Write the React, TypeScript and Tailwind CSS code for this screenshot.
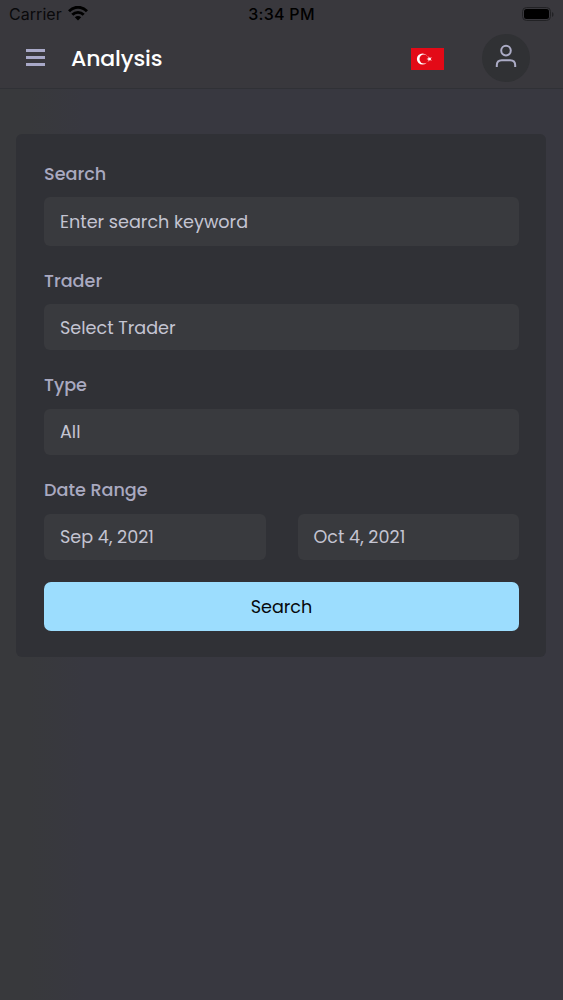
import type { ReactNode } from 'react'

export default function App() {
  return (
    <div className="flex h-[1000px] w-full flex-col overflow-hidden bg-gradient-to-r from-[#38393c] from-5% to-[#383840] to-15% font-[Poppins,Inter,sans-serif]">
      <StatusBar />
      <Header />
      <main className="pt-[45px] pr-[17px] pl-4">
        <SearchForm />
      </main>
    </div>
  )
}

function StatusBar() {
  return (
    <div className="grid h-7 shrink-0 grid-cols-3 items-center bg-[#39383d] pr-[9px] pl-[9px] font-[Inter,sans-serif] text-black">
      <div className="flex items-center gap-[6px]">
        <span className="text-[16px] tracking-[0.05px] text-[#09090b]">Carrier</span>
        <svg className="-mt-px h-[15px] w-5" viewBox="0 0 20 15" fill="none" stroke="currentColor" strokeWidth="2.9">
          <path d="M1 5.3C6-.1 14-.1 19 5.3" />
          <path d="M4.3 8.8c3.2-3.3 8.2-3.3 11.4 0" />
          <path d="M10 14.6l-3.2-3.3c1.8-1.8 4.6-1.8 6.4 0z" fill="currentColor" stroke="none" />
        </svg>
      </div>
      <span className="text-center text-[16px] font-medium tracking-[0.3px]">3:34 PM</span>
      <svg className="h-[15px] w-[33px] justify-self-end" viewBox="0 0 33 15">
        <rect x="1.5" y="0.5" width="28" height="13" rx="4" fill="none" stroke="#222225" />
        <rect x="3" y="2" width="25" height="10" rx="2.5" fill="#000" />
        <path d="M31 5c2 .7 2 4.3 0 5z" fill="#222225" />
      </svg>
    </div>
  )
}

function Header() {
  return (
    <header className="flex h-[61px] shrink-0 items-center border-b border-[#303136] bg-[#39383d] pr-[33px] pl-[26px]">
      <button aria-label="Menu" className="-mt-[2px] flex w-[19px] flex-col gap-[4px]">
        <span className="h-[3px] bg-[#a9a9c8]" />
        <span className="h-[3px] bg-[#a9a9c8]" />
        <span className="h-[3px] bg-[#a9a9c8]" />
      </button>
      <h1 className="ml-[26px] text-[22px] font-medium tracking-[-0.15px] text-white">Analysis</h1>
      <div className="ml-auto flex items-center gap-[38px]">
        <TurkishFlag />
        <button aria-label="Profile" className="flex size-12 items-center justify-center rounded-full bg-[#303134]">
          <svg className="-mt-[5px] h-6 w-6" viewBox="0 0 24 24" fill="none" stroke="#acacc6" strokeWidth="2">
            <circle cx="12" cy="6.6" r="4.8" />
            <path d="M2.8 23v-1.7c0-3 2-5 5-5h8.4c3 0 5 2 5 5V23" />
          </svg>
        </button>
      </div>
    </header>
  )
}

function TurkishFlag() {
  return (
    <svg className="mt-[2px] h-[22px] w-[33px]" viewBox="0 0 33 22">
      <rect width="33" height="22" fill="#e30a17" />
      <circle cx="11.5" cy="11" r="5.6" fill="#fff" />
      <circle cx="13" cy="11" r="4.5" fill="#e30a17" />
      <path d="M15.5 11l2-.7V8.2l1.3 1.7 2-.6-1.2 1.7 1.2 1.7-2-.6-1.3 1.7v-2.1z" fill="#fff" />
    </svg>
  )
}

function SearchForm() {
  return (
    <form
      onSubmit={(e) => e.preventDefault()}
      className="flex flex-col gap-[23px] rounded-md bg-[#303136] pt-7 pr-[27px] pb-[26px] pl-7"
    >
      <Field label="Search" labelClass="mb-[11px]">
        <input
          placeholder="Enter search keyword"
          className="h-[49px] w-full rounded-md bg-[#393a3e] px-4 text-[17.6px] text-[#c4c4d2] outline-none placeholder:text-[#c4c4d2]"
        />
      </Field>
      <Field label="Trader" labelClass="mb-[11px]">
        <Picker value="Select Trader" className="pt-[2px]" />
      </Field>
      <Field label="Type" labelClass="mb-[12px]">
        <Picker value="All" className="pt-px" />
      </Field>
      <Field label="Date Range" labelClass="mb-[12px]">
        <div className="grid grid-cols-2 gap-8">
          <Picker value="Sep 4, 2021" />
          <Picker value="Oct 4, 2021" />
        </div>
      </Field>
      <button
        type="submit"
        className="-mt-px h-[49px] rounded-[7px] bg-[#9cddfe] pt-px text-[17.6px] text-[#07090c]"
      >
        Search
      </button>
    </form>
  )
}

function Field({ label, labelClass, children }: { label: string; labelClass: string; children: ReactNode }) {
  return (
    <div className="flex flex-col">
      <span className={`text-[17.6px] leading-6 font-medium text-[#a9a9c0] ${labelClass}`}>{label}</span>
      {children}
    </div>
  )
}

function Picker({ value, className = '' }: { value: string; className?: string }) {
  return (
    <button
      type="button"
      className={`h-[46px] w-full rounded-md bg-[#393a3e] px-4 text-left text-[17.6px] whitespace-nowrap text-[#c4c4d2] ${className}`}
    >
      {value}
    </button>
  )
}
